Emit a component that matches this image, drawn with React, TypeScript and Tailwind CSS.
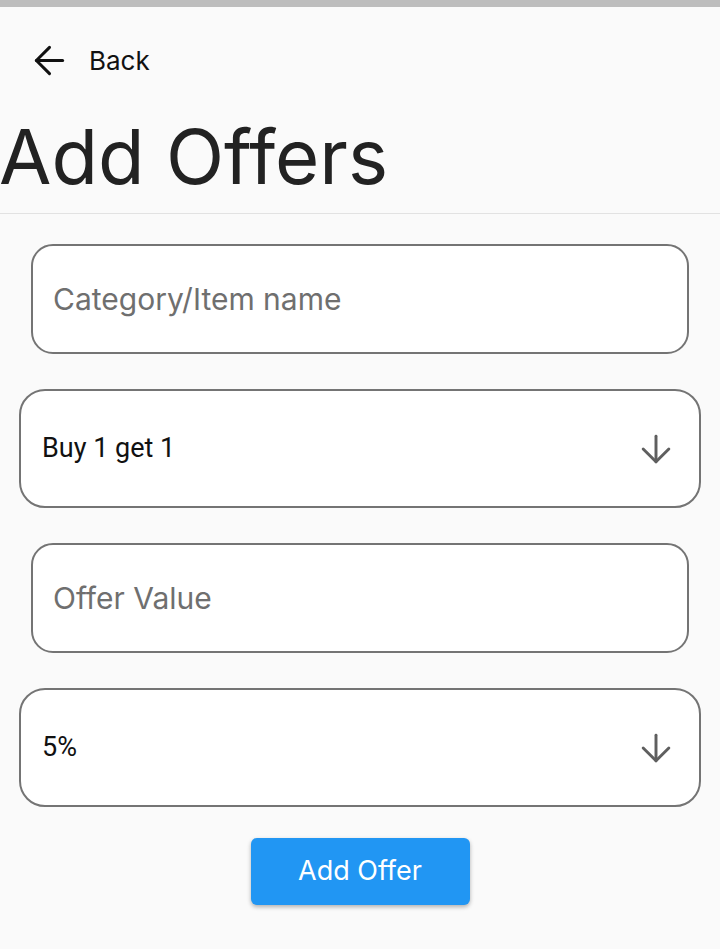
import { ArrowLeft, ArrowDown } from "lucide-react";

function TextField({ placeholder }: { placeholder: string }) {
  return (
    <div className="mx-[31px] h-[110px] rounded-[22px] border-2 border-[#747474] bg-white flex items-center px-[20px]">
      <span className="text-[30px] text-[#6f6f6f] font-['Inter',sans-serif]">{placeholder}</span>
    </div>
  );
}

function SelectField({ value }: { value: string }) {
  return (
    <div className="mx-[19px] h-[119px] rounded-[26px] border-2 border-[#747474] bg-white flex items-center justify-between pl-[21px] pr-[21px]">
      <span className="text-[27px] text-[#111] font-['Roboto',sans-serif]">{value}</span>
      <ArrowDown size={44} strokeWidth={1.6} className="text-[#5f5f5f]" />
    </div>
  );
}

export default function App() {
  return (
    <div className="min-h-[949px] bg-[#fafafa] font-['Inter',sans-serif]">
      <div className="h-[7px] bg-[#bdbdbd]" />

      <div className="flex items-center pl-[27px] pt-[27px] h-[79px]">
        <ArrowLeft size={45} strokeWidth={1.6} className="text-[#111]" />
        <span className="ml-[17px] text-[26px] text-[#111]">Back</span>
      </div>

      <h1 className="mt-[20px] text-[76px] leading-[100px] text-[#222] -ml-[1px]">Add Offers</h1>

      <div className="mt-[7px] h-px bg-[#e2e2e2]" />

      <div className="flex flex-col pt-[30px] gap-[35px]">
        <TextField placeholder="Category/Item name" />
        <SelectField value="Buy 1 get 1" />
        <TextField placeholder="Offer Value" />
        <SelectField value="5%" />
      </div>

      <div className="flex justify-center pt-[31px]">
        <button className="w-[219px] h-[67px] rounded-[6px] bg-[#2196f3] text-white text-[27px] shadow-[0_2px_4px_rgba(0,0,0,0.3)]">
          Add Offer
        </button>
      </div>
    </div>
  );
}
